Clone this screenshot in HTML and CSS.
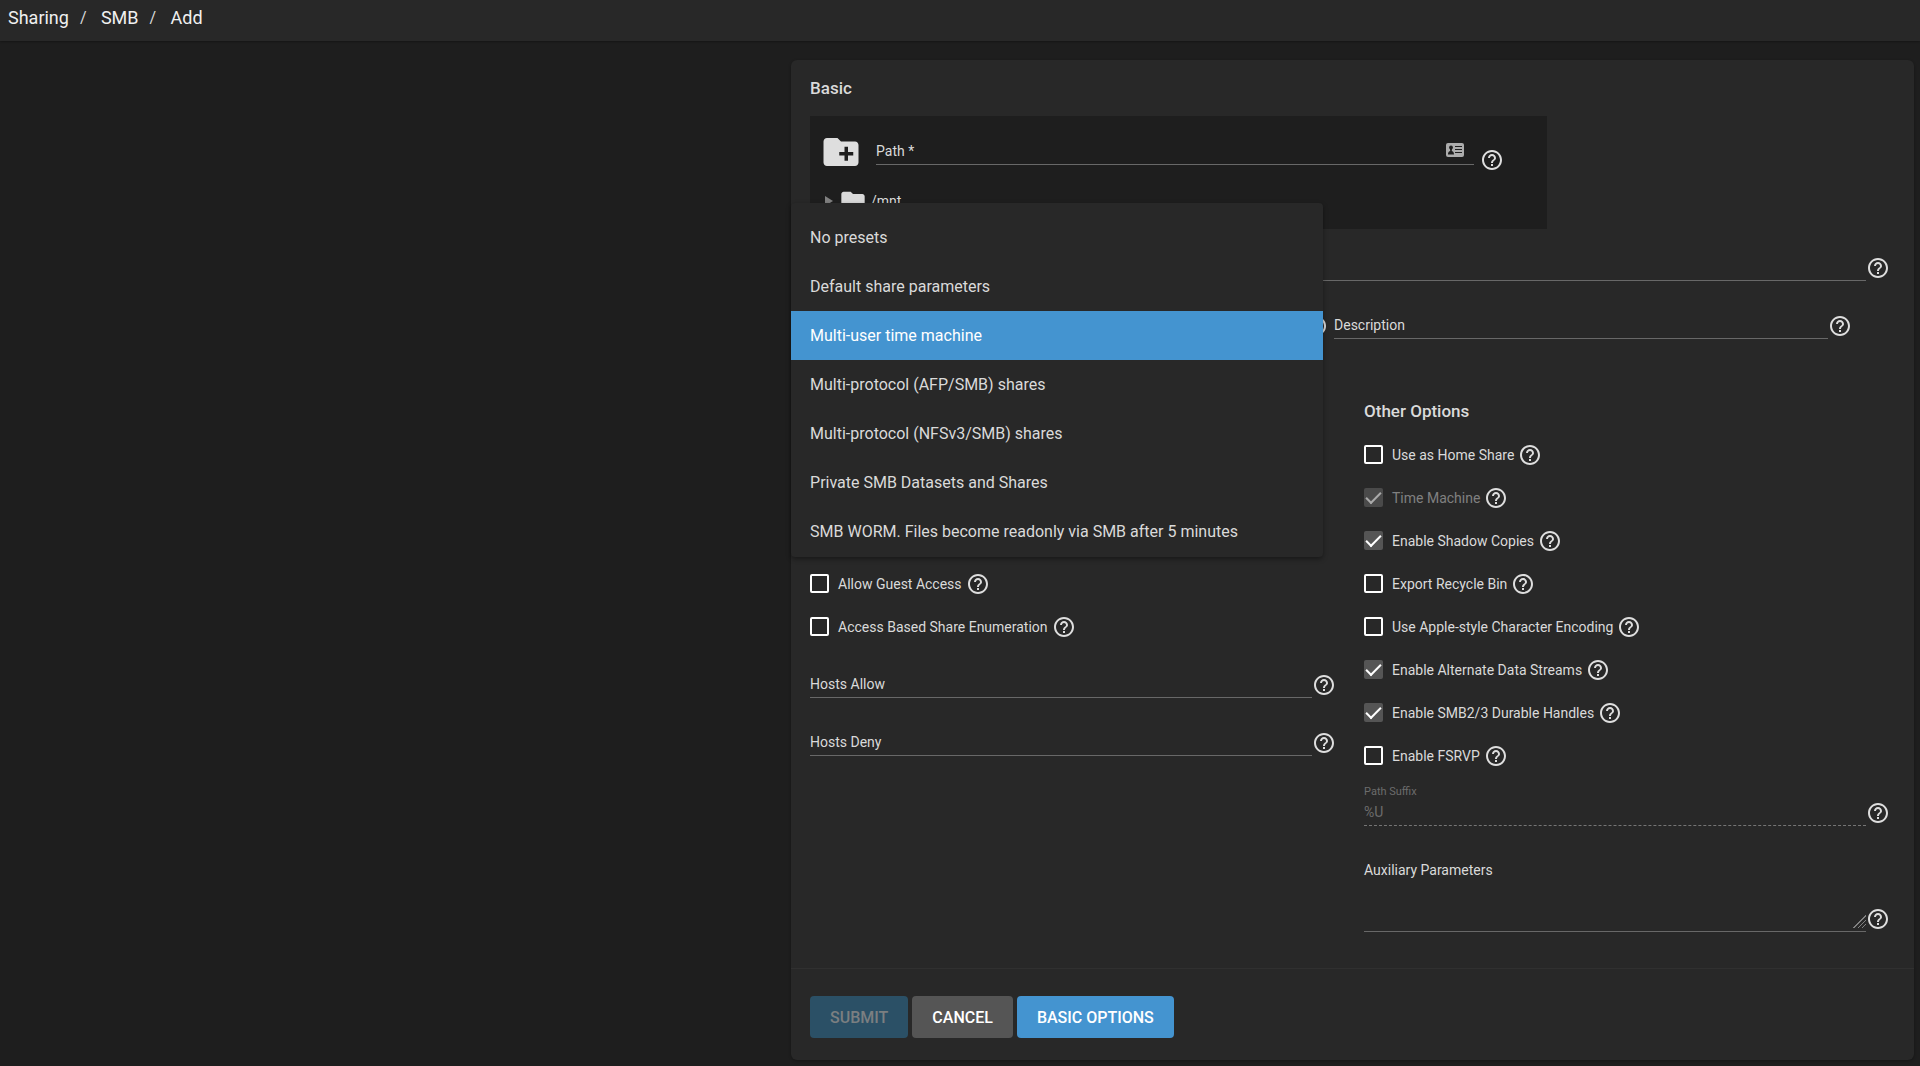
FILE: index.html
```html
<!DOCTYPE html>
<html lang="en">
<head>
  <meta charset="UTF-8">
  <meta name="viewport" content="width=device-width, initial-scale=1.0">
  <title>Sharing / SMB / Add</title>
  <link rel="stylesheet" href="styles.css">
</head>
<body>
  <!-- Shared icons -->
  <svg class="sprite" aria-hidden="true">
    <symbol id="icon-help" viewBox="0 0 24 24">
      <path d="M11 18h2v-2h-2v2zm1-16C6.480 2 2 6.480 2 12s4.480 10 10 10 10-4.480 10-10S17.520 2 12 2zm0 18c-4.410 0-8-3.590-8-8s3.590-8 8-8 8 3.590 8 8-3.590 8-8 8zm0-14c-2.210 0-4 1.790-4 4h2c0-1.100.9-2 2-2s2 .9 2 2c0 2-3 1.750-3 5h2c0-2.250 3-2.500 3-5 0-2.210-1.790-4-4-4z"/>
    </symbol>
    <symbol id="icon-folder" viewBox="0 0 24 24">
      <path d="M10 4H4c-1.100 0-2 .9-2 2v12c0 1.100.9 2 2 2h16c1.100 0 2-.9 2-2V8c0-1.100-.9-2-2-2h-8l-2-2z"/>
    </symbol>
    <symbol id="icon-new-folder" viewBox="0 0 24 24">
      <path d="M20 6h-8l-2-2H4c-1.110 0-1.990.89-1.990 2L2 18c0 1.110.89 2 2 2h16c1.110 0 2-.89 2-2V8c0-1.110-.89-2-2-2zm-1 8h-3v3h-2v-3h-3v-2h3V9h2v3h3v2z"/>
    </symbol>
  </svg>

  <header>
    <nav class="breadcrumb" aria-label="Breadcrumb">
      <a href="#">Sharing</a>
      <span>/</span>
      <a href="#">SMB</a>
      <span>/</span>
      <a href="#">Add</a>
    </nav>
  </header>

  <main>
    <form class="card">
      <div class="card-body">
        <h2>Basic</h2>

        <div class="explorer">
          <div class="explorer-row">
            <button type="button" class="icon-btn" aria-label="Create dataset">
              <svg class="icon-lg"><use href="#icon-new-folder"/></svg>
            </button>
            <div class="control">
              <label for="path">Path *</label>
              <input type="text" id="path">
              <svg class="card-icon" viewBox="0 0 18 14">
                <rect width="18" height="14" rx="2"/>
                <path class="cutout" d="M9 3h7v1H9zM9 6h7v1H9zM9 9h7v1H9z"/>
                <circle class="cutout" cx="5" cy="4.500" r="1.900"/>
                <path class="cutout" d="M2 11.500c0-3 1.500-3 2.200-3.500L4 6h2l-.2 2c.7.500 2.200.500 2.200 3.500z"/>
              </svg>
            </div>
            <button type="button" class="help" aria-label="Help"><svg><use href="#icon-help"/></svg></button>
          </div>
          <div class="tree-row">
            <svg class="arrow" viewBox="0 0 8 10"><path d="M0 0l8 5-8 5z"/></svg>
            <svg class="icon-md"><use href="#icon-folder"/></svg>
            <span>/mnt</span>
          </div>
        </div>

        <div class="fields">
          <div class="field">
            <div class="control">
              <label for="name" class="covered">Name</label>
              <input type="text" id="name">
            </div>
            <button type="button" class="help" aria-label="Help"><svg><use href="#icon-help"/></svg></button>
          </div>

          <div class="field-pair">
            <div class="field">
              <div class="control">
                <select id="purpose" class="covered" aria-label="Purpose">
                  <option>Default share parameters</option>
                </select>
                <!-- Open menu of the purpose select -->
                <ul class="menu" role="listbox" aria-label="Purpose">
                  <li role="option">No presets</li>
                  <li role="option">Default share parameters</li>
                  <li role="option" class="active" aria-selected="true">Multi-user time machine</li>
                  <li role="option">Multi-protocol (AFP/SMB) shares</li>
                  <li role="option">Multi-protocol (NFSv3/SMB) shares</li>
                  <li role="option">Private SMB Datasets and Shares</li>
                  <li role="option">SMB WORM. Files become readonly via SMB after 5 minutes</li>
                </ul>
              </div>
              <button type="button" class="help" aria-label="Help"><svg><use href="#icon-help"/></svg></button>
            </div>
            <div class="field">
              <div class="control">
                <label for="description">Description</label>
                <input type="text" id="description">
              </div>
              <button type="button" class="help" aria-label="Help"><svg><use href="#icon-help"/></svg></button>
            </div>
          </div>
        </div>

        
        <div class="check covered">
          <label><input type="checkbox" checked>Enabled</label>
        </div>

        <div class="columns">
          <section>
            <h2 class="covered">Access</h2>
            <div class="check covered">
              <label><input type="checkbox" checked>Enable ACL</label>
            </div>
            <div class="check covered">
              <label><input type="checkbox">Export Read Only</label>
            </div>
            <div class="check covered">
              <label><input type="checkbox" checked>Browsable to Network Clients</label>
            </div>
            <div class="check">
              <label><input type="checkbox">Allow Guest Access</label>
              <button type="button" class="help" aria-label="Help"><svg><use href="#icon-help"/></svg></button>
            </div>
            <div class="check">
              <label><input type="checkbox">Access Based Share Enumeration</label>
              <button type="button" class="help" aria-label="Help"><svg><use href="#icon-help"/></svg></button>
            </div>
            <div class="fields">
              <div class="field">
                <div class="control">
                  <label for="hosts-allow">Hosts Allow</label>
                  <input type="text" id="hosts-allow">
                </div>
                <button type="button" class="help" aria-label="Help"><svg><use href="#icon-help"/></svg></button>
              </div>
              <div class="field">
                <div class="control">
                  <label for="hosts-deny">Hosts Deny</label>
                  <input type="text" id="hosts-deny">
                </div>
                <button type="button" class="help" aria-label="Help"><svg><use href="#icon-help"/></svg></button>
              </div>
            </div>
          </section>

          <section>
            <h2>Other Options</h2>
            <div class="check">
              <label><input type="checkbox">Use as Home Share</label>
              <button type="button" class="help" aria-label="Help"><svg><use href="#icon-help"/></svg></button>
            </div>
            <div class="check disabled">
              <label><input type="checkbox" checked disabled>Time Machine</label>
              <button type="button" class="help" aria-label="Help"><svg><use href="#icon-help"/></svg></button>
            </div>
            <div class="check">
              <label><input type="checkbox" checked>Enable Shadow Copies</label>
              <button type="button" class="help" aria-label="Help"><svg><use href="#icon-help"/></svg></button>
            </div>
            <div class="check">
              <label><input type="checkbox">Export Recycle Bin</label>
              <button type="button" class="help" aria-label="Help"><svg><use href="#icon-help"/></svg></button>
            </div>
            <div class="check">
              <label><input type="checkbox">Use Apple-style Character Encoding</label>
              <button type="button" class="help" aria-label="Help"><svg><use href="#icon-help"/></svg></button>
            </div>
            <div class="check">
              <label><input type="checkbox" checked>Enable Alternate Data Streams</label>
              <button type="button" class="help" aria-label="Help"><svg><use href="#icon-help"/></svg></button>
            </div>
            <div class="check">
              <label><input type="checkbox" checked>Enable SMB2/3 Durable Handles</label>
              <button type="button" class="help" aria-label="Help"><svg><use href="#icon-help"/></svg></button>
            </div>
            <div class="check">
              <label><input type="checkbox">Enable FSRVP</label>
              <button type="button" class="help" aria-label="Help"><svg><use href="#icon-help"/></svg></button>
            </div>
            <div class="field suffix">
              <div class="stack">
                <label for="path-suffix">Path Suffix</label>
                <input type="text" id="path-suffix" value="%U" disabled>
              </div>
              <button type="button" class="help" aria-label="Help"><svg><use href="#icon-help"/></svg></button>
            </div>
            <div class="field auxiliary">
              <div class="stack">
                <label for="aux-params">Auxiliary Parameters</label>
                <textarea id="aux-params"></textarea>
              </div>
              <button type="button" class="help" aria-label="Help"><svg><use href="#icon-help"/></svg></button>
            </div>
          </section>
        </div>
      </div>

      <div class="actions">
        <button type="submit" class="btn btn-primary" disabled>SUBMIT</button>
        <button type="button" class="btn">CANCEL</button>
        <button type="button" class="btn btn-primary">BASIC OPTIONS</button>
      </div>
    </form>
  </main>
</body>
</html>
```
FILE: styles.css
```css
* {
  box-sizing: border-box;
}
body {
  font-family: Roboto, sans-serif;
  font-size: 14px;
  line-height: 20px;
  margin: 0;
  background-color: #1e1e1e;
  color: #dadada;
}
.sprite {
  position: absolute;
  width: 0;
  height: 0;
}
svg {
  display: block;
  fill: currentColor;
}
header {
  background-color: #282828;
  height: 41px;
  padding: 6px 8px;
  box-shadow: 0 1px 2px rgba(0, 0, 0, 0.3);
}
.breadcrumb {
  display: flex;
  font-size: 18px;
  line-height: 24px;
}
.breadcrumb a {
  color: #f0f0f0;
  text-decoration: none;
}
.breadcrumb span {
  width: 32px;
  padding-left: 11px;
  font-size: 16px;
}
main {
  padding: 19px 6px 7px 41.2%;
}
.card {
  background-color: #282828;
  border-radius: 6px;
  box-shadow: 0 1px 3px rgba(0, 0, 0, 0.3);
}
.card-body {
  padding: 16px 24px 36px 19px;
}
h2 {
  margin: 0;
  font-size: 17px;
  font-weight: 500;
  line-height: 24px;
}

/* Path explorer */
.explorer {
  width: 68.2%;
  margin-top: 16px;
  padding: 15px 43px 14px 10px;
  background-color: #1e1e1e;
}
.explorer-row {
  display: flex;
  align-items: center;
}
.explorer-row .control {
  margin-bottom: 2px;
}
.explorer-row .help {
  margin: 16px 0 0 6px;
}
.icon-btn, .help {
  flex: none;
  padding: 0;
  border: 0;
  background: none;
  color: #dedede;
}
.icon-btn {
  margin-right: 14px;
}
.icon-lg {
  width: 42px;
  height: 42px;
}
.icon-md {
  width: 28px;
  height: 28px;
}
.help, .help svg {
  width: 24px;
  height: 24px;
}
.card-icon {
  position: absolute;
  right: 10px;
  top: 6px;
  width: 18px;
  height: 14px;
  color: #acacac;
}
.cutout {
  fill: #1e1e1e;
}
.tree-row {
  display: flex;
  align-items: center;
  margin-top: 14px;
  padding-left: 5px;
}
.tree-row .arrow {
  width: 8px;
  height: 10px;
  margin-right: 6px;
  color: #808080;
}
.tree-row span {
  margin-left: 4px;
}

/* Fields */
.fields {
  display: flex;
  flex-direction: column;
  gap: 30px;
  padding-top: 24px;
}
.columns .fields {
  padding-top: 22px;
}
.field {
  display: flex;
  align-items: flex-end;
}
.field .help {
  margin-bottom: 1px;
}
.field-pair {
  display: grid;
  grid-template-columns: 1fr 1fr;
  gap: 6px;
  padding-right: 38px;
}
.control {
  position: relative;
  display: grid;
  flex: 1;
  height: 28px;
  border-bottom: 1px solid #686868;
}
.control > label, .control > input, .control > select {
  grid-area: 1 / 1;
  align-self: center;
}
input[type="text"], select, textarea {
  width: 100%;
  height: 27px;
  padding: 0;
  border: 0;
  outline: 0;
  background: none;
  color: inherit;
  font: inherit;
}
.stack {
  flex: 1;
}
.stack label, .stack textarea {
  display: block;
}
.suffix {
  margin-top: 9px;
  color: #6c6c6c;
}
.suffix label {
  font-size: 11px;
  line-height: 12px;
}
.suffix input[type="text"] {
  display: block;
  height: 28px;
  border-bottom: 1px dashed #757575;
}
.auxiliary {
  margin-top: 34px;
}
.auxiliary textarea {
  height: 48px;
  resize: vertical;
}
.auxiliary .stack {
  padding-bottom: 3px;
  border-bottom: 1px solid #686868;
}
textarea::-webkit-resizer {
  background: linear-gradient(135deg, #282828 50%, transparent 50%), repeating-linear-gradient(135deg, #808080 0 1px, #282828 1px 3px);
}

/* Check boxes */
.check {
  display: flex;
  align-items: center;
  height: 43px;
}
.check label {
  display: flex;
  align-items: center;
  gap: 9px;
  margin-right: 4px;
}
.check input {
  appearance: none;
  width: 19px;
  height: 19px;
  margin: 0;
  border: 2px solid #fff;
  border-radius: 2px;
}
.check input:checked {
  display: grid;
  place-items: center;
  border: 0;
  background-color: #555;
}
.check input:checked::before {
  content: "";
  width: 13px;
  height: 6px;
  margin-bottom: 4px;
  border-left: 2px solid #fff;
  border-bottom: 2px solid #fff;
  transform: rotate(-45deg);
}
.check.disabled label {
  color: #808080;
}
.check.disabled input {
  background-color: #4a4a4a;
}
.check.disabled input::before {
  border-color: #aaa;
}

.columns {
  display: grid;
  grid-template-columns: 1fr 1fr;
  gap: 28px;
  padding-top: 17px;
}
.columns h2 {
  margin-bottom: 10px;
}

/* Open select menu */
.menu {
  position: absolute;
  z-index: 1;
  left: -19px;
  right: -19px;
  bottom: -219px;
  margin: 0;
  padding: 10px 0 1px;
  list-style: none;
  background-color: #282828;
  border-radius: 4px;
  box-shadow: 0 2px 5px rgba(0, 0, 0, 0.4);
  font-size: 16px;
}
.menu li {
  padding: 0 19px;
  line-height: 49px;
}
.menu .active {
  background-color: #4494d0;
  color: #fff;
}
.covered {
  visibility: hidden;
}

.actions {
  display: flex;
  gap: 4px;
  padding: 27px 19px 22px;
  border-top: 1px solid #303030;
}
.btn {
  height: 42px;
  padding: 0 20px;
  border: 0;
  border-radius: 4px;
  background-color: #555;
  color: #fff;
  font: 500 16px Roboto, sans-serif;
}
.btn-primary {
  background-color: #4494d0;
}
.btn:disabled {
  background-color: #2b5066;
  color: #7b7f81;
}
```
